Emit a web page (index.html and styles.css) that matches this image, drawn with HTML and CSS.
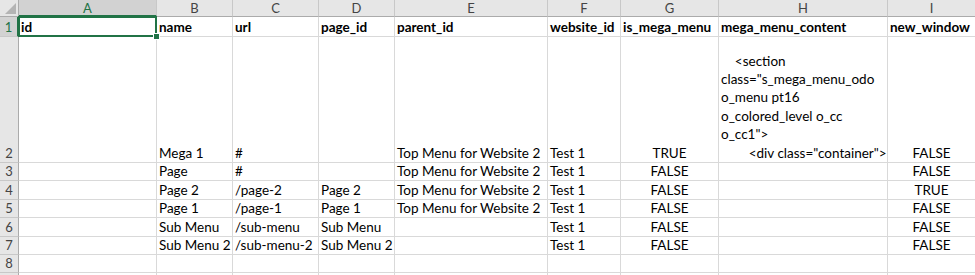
FILE: index.html
```html
<!DOCTYPE html>
<html>
<head>
<meta charset="utf-8">
<link rel="stylesheet" href="styles.css">
</head>
<body>
<div class="sheet">
  <div class="corner"><span class="tri"></span></div>
  <div class="colh sel">A</div>
  <div class="colh">B</div>
  <div class="colh">C</div>
  <div class="colh">D</div>
  <div class="colh">E</div>
  <div class="colh">F</div>
  <div class="colh">G</div>
  <div class="colh">H</div>
  <div class="colh">I</div>

  <div class="rowh sel">1</div>
  <div class="c b active">id</div>
  <div class="c b">name</div>
  <div class="c b">url</div>
  <div class="c b">page_id</div>
  <div class="c b">parent_id</div>
  <div class="c b">website_id</div>
  <div class="c b">is_mega_menu</div>
  <div class="c b">mega_menu_content</div>
  <div class="c b">new_window</div>

  <div class="rowh">2</div>
  <div class="c"></div>
  <div class="c">Mega 1</div>
  <div class="c">#</div>
  <div class="c"></div>
  <div class="c">Top Menu for Website 2</div>
  <div class="c">Test 1</div>
  <div class="c ctr">TRUE</div>
  <div class="c wrap"><span class="lines">    &lt;section<br>class="s_mega_menu_odo<br>o_menu pt16<br>o_colored_level o_cc<br>o_cc1"&gt;<br>        &lt;div class="container"&gt;</span></div>
  <div class="c ctr">FALSE</div>

  <div class="rowh">3</div>
  <div class="c"></div>
  <div class="c">Page</div>
  <div class="c">#</div>
  <div class="c"></div>
  <div class="c">Top Menu for Website 2</div>
  <div class="c">Test 1</div>
  <div class="c ctr">FALSE</div>
  <div class="c"></div>
  <div class="c ctr">FALSE</div>

  <div class="rowh">4</div>
  <div class="c"></div>
  <div class="c">Page 2</div>
  <div class="c">/page-2</div>
  <div class="c">Page 2</div>
  <div class="c">Top Menu for Website 2</div>
  <div class="c">Test 1</div>
  <div class="c ctr">FALSE</div>
  <div class="c"></div>
  <div class="c ctr">TRUE</div>

  <div class="rowh">5</div>
  <div class="c"></div>
  <div class="c">Page 1</div>
  <div class="c">/page-1</div>
  <div class="c">Page 1</div>
  <div class="c">Top Menu for Website 2</div>
  <div class="c">Test 1</div>
  <div class="c ctr">FALSE</div>
  <div class="c"></div>
  <div class="c ctr">FALSE</div>

  <div class="rowh">6</div>
  <div class="c"></div>
  <div class="c">Sub Menu</div>
  <div class="c">/sub-menu</div>
  <div class="c">Sub Menu</div>
  <div class="c"></div>
  <div class="c">Test 1</div>
  <div class="c ctr">FALSE</div>
  <div class="c"></div>
  <div class="c ctr">FALSE</div>

  <div class="rowh">7</div>
  <div class="c"></div>
  <div class="c">Sub Menu 2</div>
  <div class="c">/sub-menu-2</div>
  <div class="c">Sub Menu 2</div>
  <div class="c"></div>
  <div class="c">Test 1</div>
  <div class="c ctr">FALSE</div>
  <div class="c"></div>
  <div class="c ctr">FALSE</div>

  <div class="rowh">8</div>
  <div class="c"></div>
  <div class="c"></div>
  <div class="c"></div>
  <div class="c"></div>
  <div class="c"></div>
  <div class="c"></div>
  <div class="c"></div>
  <div class="c"></div>
  <div class="c"></div>

  <div class="rowh"></div>
  <div class="c"></div>
  <div class="c"></div>
  <div class="c"></div>
  <div class="c"></div>
  <div class="c"></div>
  <div class="c"></div>
  <div class="c"></div>
  <div class="c"></div>
  <div class="c"></div>
</div>
</body>
</html>
```

FILE: styles.css
```css
html, body {
  margin: 0;
  padding: 0;
  background: #ffffff;
}

.sheet {
  width: 975px;
  height: 275px;
  overflow: hidden;
  display: grid;
  grid-template-columns: 19px 138px 76px 86px 76px 153px 73px 98px 169px 88px;
  grid-template-rows: 17px 20px 126px 18px 19px 18px 19px 18px 18px 20px;
  font-family: "Lato", "Liberation Sans", sans-serif;
  font-size: 13.5px;
  color: #000;
}

.corner {
  position: relative;
  background: #e6e6e6;
  border-right: 1px solid #ababab;
  border-bottom: 1px solid #ababab;
  box-sizing: border-box;
}

.tri {
  position: absolute;
  right: 2px;
  bottom: 2px;
  width: 0;
  height: 0;
  border-left: 11px solid transparent;
  border-bottom: 11px solid #b4b4b4;
}

.colh {
  background: #e6e6e6;
  color: #444;
  border-right: 1px solid #c8c8c8;
  border-bottom: 1px solid #ababab;
  box-sizing: border-box;
  display: flex;
  align-items: center;
  justify-content: center;
  font-size: 13px;
}

.colh.sel {
  background: #d2d2d2;
  color: #217346;
  border-bottom: 2px solid #217346;
}

.rowh {
  background: #e6e6e6;
  color: #444;
  border-right: 1px solid #ababab;
  border-bottom: 1px solid #c8c8c8;
  box-sizing: border-box;
  display: flex;
  align-items: flex-end;
  justify-content: center;
  font-size: 13px;
  line-height: 17px;
}

.rowh.sel {
  background: #d2d2d2;
  color: #217346;
  border-right: 2px solid #217346;
}

.c {
  border-right: 1px solid #d9d9d9;
  border-bottom: 1px solid #d9d9d9;
  box-sizing: border-box;
  display: flex;
  align-items: flex-end;
  padding: 0 2px;
  white-space: nowrap;
  line-height: 17px;
  min-width: 0;
}

.c.b {
  font-weight: 700;
}

.c.ctr {
  justify-content: center;
}

.c.wrap .lines {
  white-space: pre;
  line-height: 18.4px;
}

.active {
  position: relative;
}

.active::after {
  content: "";
  position: absolute;
  left: -1px;
  top: -1px;
  right: -1px;
  bottom: -1px;
  border: 2px solid #217346;
  pointer-events: none;
}

.active::before {
  content: "";
  position: absolute;
  right: -4px;
  bottom: -4px;
  width: 5px;
  height: 5px;
  background: #217346;
  border: 1px solid #fff;
  z-index: 2;
}
```
